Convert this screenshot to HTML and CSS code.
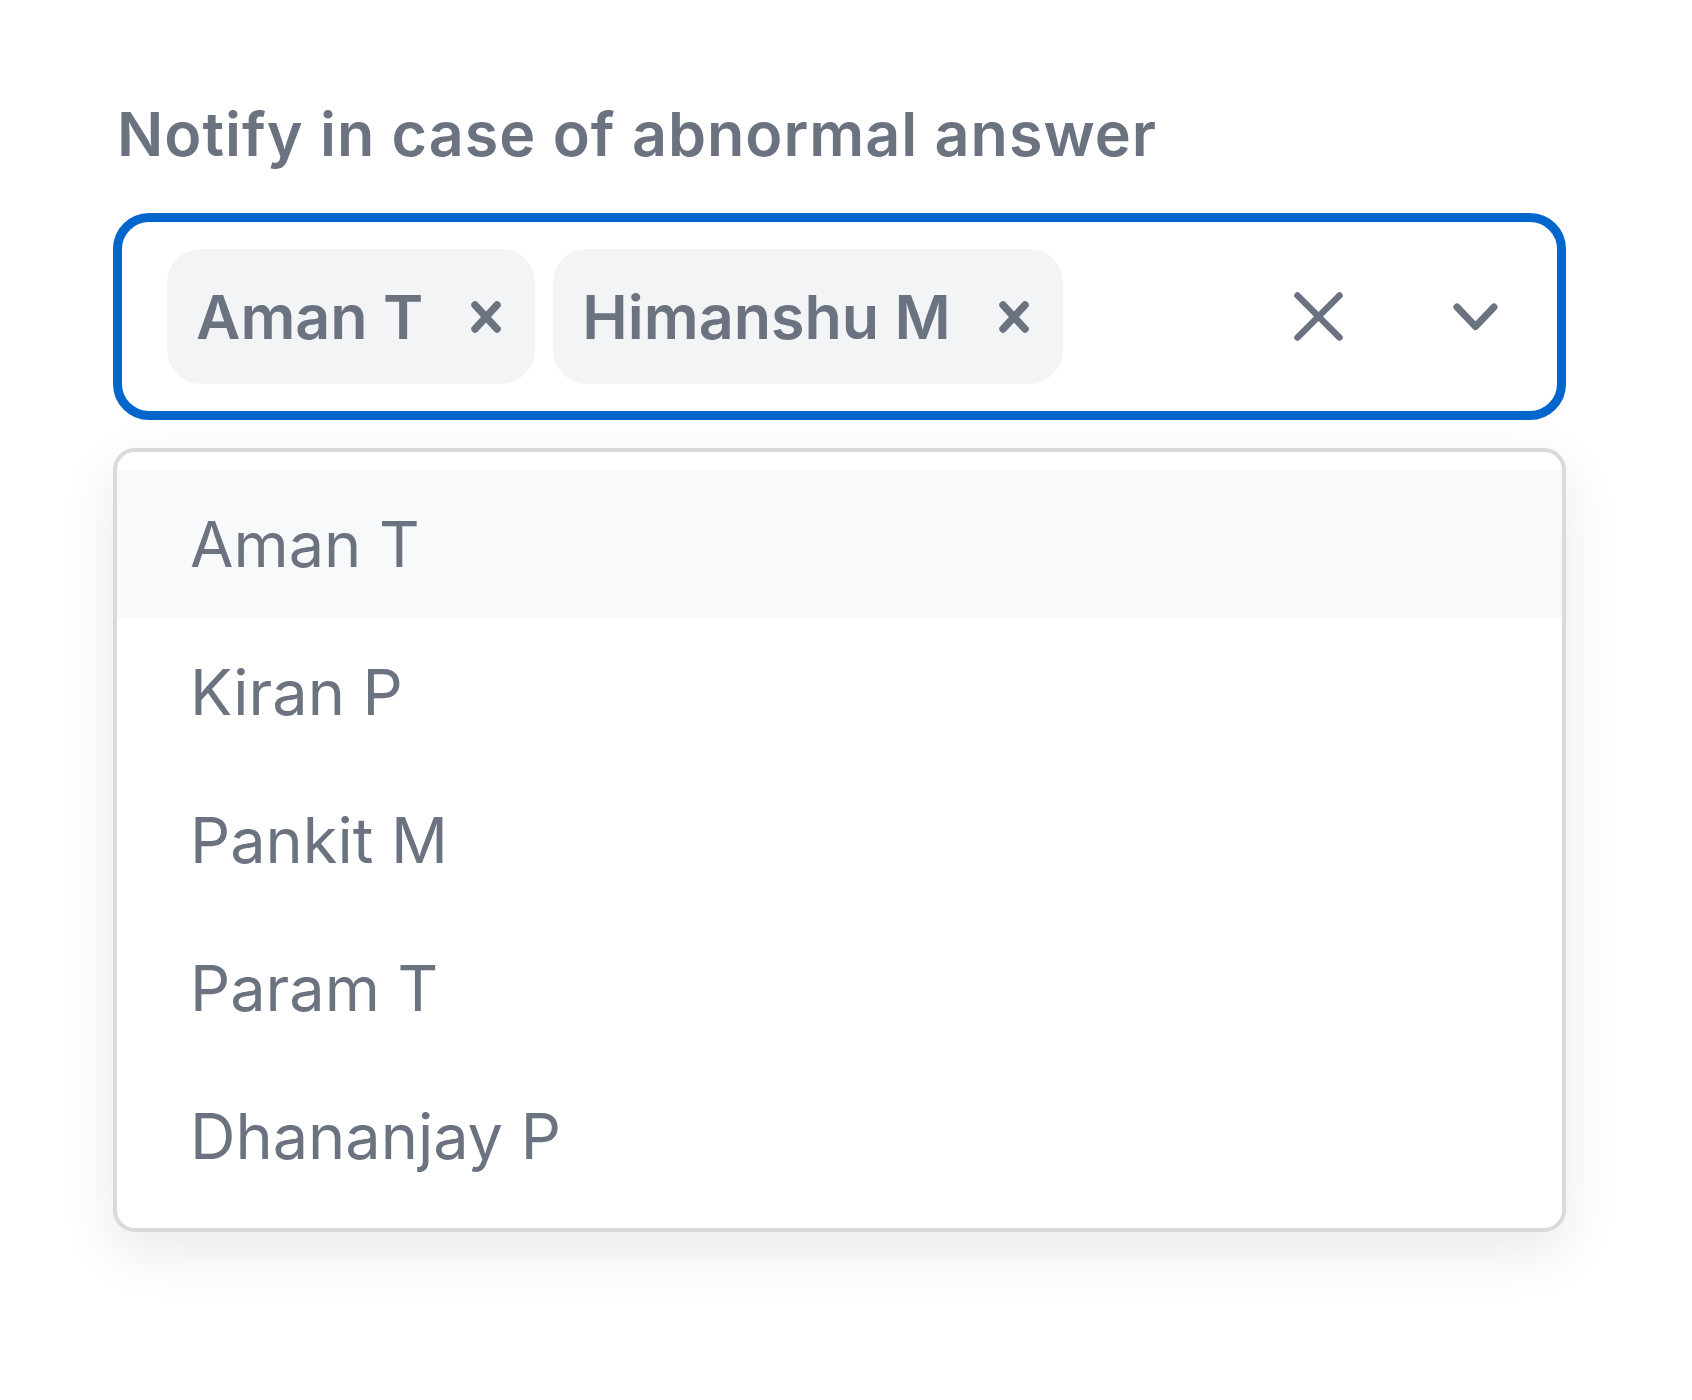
FILE: index.html
```html
<!DOCTYPE html>
<html lang="en">
<head>
  <meta charset="UTF-8" />
  <meta name="viewport" content="width=device-width, initial-scale=1" />
  <title>Notify select</title>
  <link rel="stylesheet" href="styles.css">
</head>
<body>

  <main class="notify-field">
    <h1 class="field-label">Notify in case of abnormal answer</h1>

    <!-- Multi select control -->
    <div class="select-control">
      <div class="select-values">
        <div class="chip">
          <span class="chip-label">Aman T</span>
          <svg class="chip-remove" width="30" height="32" viewBox="0 0 30 32">
            <path d="M4 4 L26 28 M26 4 L4 28" />
          </svg>
        </div>
        <div class="chip">
          <span class="chip-label">Himanshu M</span>
          <svg class="chip-remove" width="30" height="32" viewBox="0 0 30 32">
            <path d="M4 4 L26 28 M26 4 L4 28" />
          </svg>
        </div>
      </div>
      <div class="select-indicators">
        <svg class="clear-icon" width="49" height="49" viewBox="0 0 49 49">
          <path d="M3.5 3.5 L45.5 45.5 M45.5 3.5 L3.5 45.5" />
        </svg>
        <svg class="chevron-icon" width="45" height="28" viewBox="0 0 45 28">
          <path d="M4 4 L22.5 23.5 L41 4" />
        </svg>
      </div>
    </div>

    <!-- Options menu -->
    <ul class="select-menu">
      <li class="menu-option is-focused">Aman T</li>
      <li class="menu-option">Kiran P</li>
      <li class="menu-option">Pankit M</li>
      <li class="menu-option">Param T</li>
      <li class="menu-option">Dhananjay P</li>
    </ul>
  </main>

</body>
</html>
```

FILE: styles.css
```css
* {
  box-sizing: border-box;
  margin: 0;
  padding: 0;
}

body {
  font-family: Inter, 'Noto Sans', sans-serif;
  background-color: #ffffff;
  color: #6b7280;
}

.notify-field {
  width: 1453px;
  margin-left: 113px;
  padding: 97px 0 160px;
}

.field-label {
  font-size: 61px;
  font-weight: 600;
  line-height: 74px;
  letter-spacing: 1px;
  padding-left: 4px;
  margin-bottom: 42px;
}

/* Control */
.select-control {
  display: flex;
  align-items: center;
  height: 207px;
  border: 9px solid #0366cd;
  border-radius: 36px;
  background: #ffffff;
  padding: 0 59px 0 45px;
}

.select-values {
  flex: 1;
  display: flex;
  gap: 18px;
}

.chip {
  display: flex;
  align-items: center;
  gap: 48px;
  height: 135px;
  padding: 0 34px 0 29px;
  background-color: #f3f4f6;
  border-radius: 34px;
}

.chip-label {
  font-size: 61px;
  font-weight: 600;
}

.chip-remove path,
.clear-icon path,
.chevron-icon path {
  fill: none;
  stroke: #6b7280;
  stroke-linecap: round;
  stroke-linejoin: round;
}

.chip-remove path {
  stroke-width: 7.5;
}

.select-indicators {
  display: flex;
  align-items: center;
  gap: 110px;
}

.clear-icon path {
  stroke-width: 6.5;
}

.chevron-icon path {
  stroke-width: 7;
}

/* Menu */
.select-menu {
  list-style: none;
  margin-top: 28px;
  border: 4px solid #dadada;
  border-radius: 22px;
  padding: 18px 0;
  background: #ffffff;
  box-shadow: 0 20px 56px rgba(0, 0, 0, 0.09);
}

.menu-option {
  height: 148px;
  line-height: 148px;
  padding-left: 73px;
  font-size: 63px;
}

.menu-option.is-focused {
  background-color: #f8f9fa;
}
```
